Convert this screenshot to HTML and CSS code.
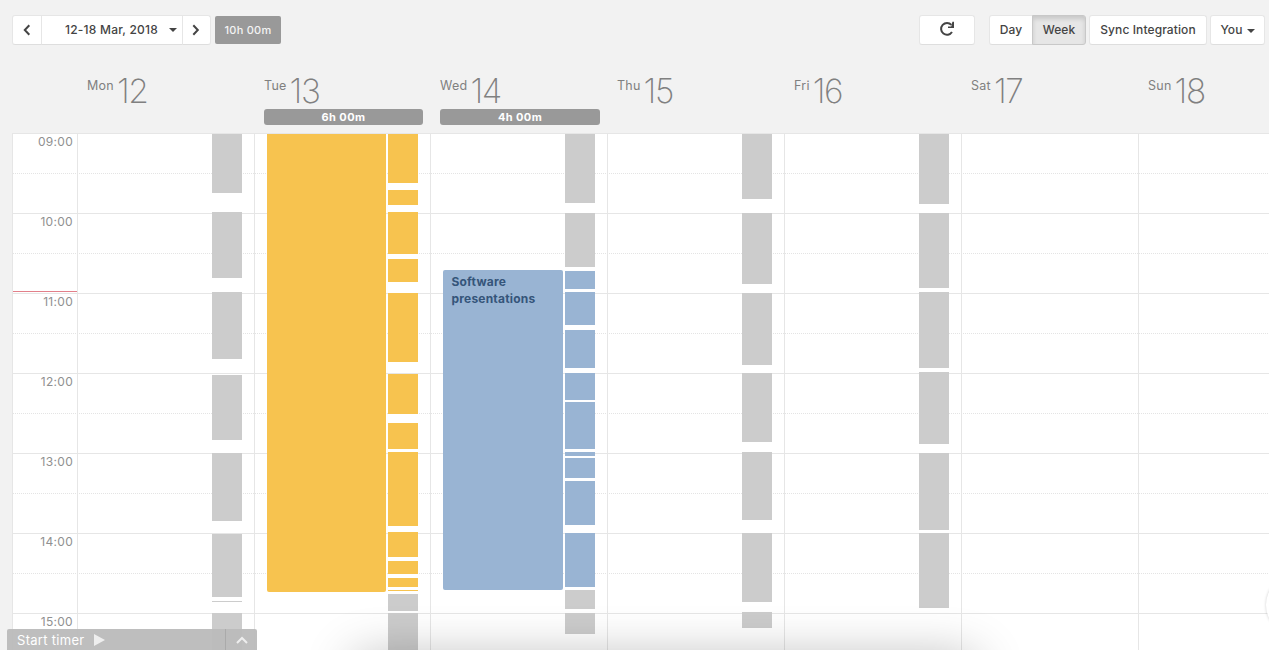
FILE: index.html
```html
<!DOCTYPE html>
<html lang="en">
<head>
<meta charset="utf-8">
<title>Timesheet</title>
<link rel="stylesheet" href="styles.css">
</head>
<body>
<div class="toolbar">
  <div class="group">
    <button class="btn prev"><svg width="8" height="12" viewBox="0 0 8 12"><path d="M6.3 1.3 1.8 6l4.5 4.7"/></svg></button>
    <button class="btn range">12-18 Mar, 2018<span class="caret"></span></button>
    <button class="btn next"><svg width="8" height="12" viewBox="0 0 8 12"><path d="M1.3 1.3 5.8 6l-4.5 4.7"/></svg></button>
  </div>
  <span class="total">10h 00m</span>
  <button class="btn refresh"><svg width="16" height="16" viewBox="0 0 16 16"><path d="M13 11A5.9 5.9 0 1 1 12.4 3.9"/><path class="solid" d="M15 .8v6.2H9V5.4h3.2L13.4 .8z"/></svg></button>
  <div class="group views">
    <button class="btn day-view">Day</button>
    <button class="btn week-view active">Week</button>
  </div>
  <button class="btn sync">Sync Integration</button>
  <button class="btn you">You<span class="caret"></span></button>
</div>

<div class="days">
  <div class="day"><div class="date"><span>Mon</span><b>12</b></div></div>
  <div class="day"><div class="date"><span>Tue</span><b>13</b></div><div class="sum">6h 00m</div></div>
  <div class="day"><div class="date"><span>Wed</span><b>14</b></div><div class="sum wide">4h 00m</div></div>
  <div class="day"><div class="date"><span>Thu</span><b>15</b></div></div>
  <div class="day"><div class="date"><span>Fri</span><b>16</b></div></div>
  <div class="day"><div class="date"><span>Sat</span><b>17</b></div></div>
  <div class="day"><div class="date"><span>Sun</span><b>18</b></div></div>
</div>

<div class="calendar">
  <div class="hours">
    <span>09:00</span><span>10:00</span><span>11:00</span><span>12:00</span><span>13:00</span><span>14:00</span><span>15:00</span>
    <i class="now"></i>
  </div>
  <div class="col">
    <div class="strip">
      <i style="height:59px"></i>
      <i style="margin-top:19px;height:66px"></i>
      <i style="margin-top:14px;height:67px"></i>
      <i style="margin-top:16px;height:65px"></i>
      <i style="margin-top:13px;height:68px"></i>
      <i style="margin-top:13px;height:63px"></i>
      <i style="margin-top:4px;height:1px"></i>
      <i style="margin-top:11px;height:37px"></i>
    </div>
  </div>
  <div class="col">
    <div class="event yellow open" style="height:458px"></div>
    <div class="strip">
      <i class="yellow" style="height:49px"></i>
      <i class="yellow" style="margin-top:7px;height:15px"></i>
      <i class="yellow" style="margin-top:7px;height:42px"></i>
      <i class="yellow" style="margin-top:5px;height:23px"></i>
      <i class="yellow" style="margin-top:11px;height:69px"></i>
      <i class="yellow" style="margin-top:12px;height:40px"></i>
      <i class="yellow" style="margin-top:9px;height:26px"></i>
      <i class="yellow" style="margin-top:3px;height:74px"></i>
      <i class="yellow" style="margin-top:6px;height:25px"></i>
      <i class="yellow" style="margin-top:4px;height:13px"></i>
      <i class="yellow" style="margin-top:4px;height:9px"></i>
      <i class="yellow" style="margin-top:3px;height:1px"></i>
      <i style="margin-top:3px;height:17px"></i>
      <i style="margin-top:2px;height:37px"></i>
    </div>
  </div>
  <div class="col">
    <div class="event blue" style="margin-top:136px;height:320px">Software<br>presentations</div>
    <div class="strip">
      <i style="height:69px"></i>
      <i style="margin-top:10px;height:54px"></i>
      <i class="blue" style="margin-top:4px;height:18px"></i>
      <i class="blue" style="margin-top:3px;height:33px"></i>
      <i class="blue" style="margin-top:5px;height:38px"></i>
      <i class="blue" style="margin-top:5px;height:27px"></i>
      <i class="blue" style="margin-top:2px;height:47px"></i>
      <i class="blue" style="margin-top:3px;height:4px"></i>
      <i class="blue" style="margin-top:2px;height:20px"></i>
      <i class="blue" style="margin-top:3px;height:44px"></i>
      <i class="blue" style="margin-top:8px;height:54px"></i>
      <i style="margin-top:3px;height:19px"></i>
      <i style="margin-top:4px;height:21px"></i>
    </div>
  </div>
  <div class="col">
    <div class="strip">
      <i style="height:65px"></i>
      <i style="margin-top:14px;height:71px"></i>
      <i style="margin-top:9px;height:72px"></i>
      <i style="margin-top:8px;height:69px"></i>
      <i style="margin-top:10px;height:68px"></i>
      <i style="margin-top:13px;height:69px"></i>
      <i style="margin-top:10px;height:16px"></i>
    </div>
  </div>
  <div class="col">
    <div class="strip">
      <i style="height:70px"></i>
      <i style="margin-top:9px;height:75px"></i>
      <i style="margin-top:4px;height:76px"></i>
      <i style="margin-top:4px;height:72px"></i>
      <i style="margin-top:9px;height:77px"></i>
      <i style="margin-top:3px;height:75px"></i>
    </div>
  </div>
  <div class="col"></div>
  <div class="col"></div>
</div>

<div class="overlays">
  <div class="dock-shadow"></div>
  <div class="help"></div>
  <div class="timer">
    <span class="start">Start timer<svg width="11" height="12" viewBox="0 0 11 12"><path d="M0 0 11 6 0 12z"/></svg></span>
    <span class="expand"><svg width="12" height="8" viewBox="0 0 12 8"><path d="M1 7 6 2l5 5"/></svg></span>
  </div>
</div>
</body>
</html>
```
FILE: styles.css
```css
* { box-sizing: border-box; }
html, body { height: 100%; overflow: hidden; }
body {
  margin: 0;
  background: #f2f2f2;
  color: #444;
  font-family: Inter, "Liberation Sans", sans-serif;
  display: flex;
  flex-direction: column;
}

/* toolbar */
.toolbar { display: flex; height: 46px; padding: 15px 4px 0 12px; flex: none; }
.group { display: flex; }
.btn {
  height: 30px;
  padding: 0;
  border: 1px solid #e6e6e6;
  border-bottom-color: #dedede;
  border-radius: 3px;
  background: #fff;
  color: #444;
  font: 500 12px/28px Inter, "Liberation Sans", sans-serif;
  letter-spacing: .1px;
  display: flex;
  align-items: center;
  justify-content: center;
}
.btn svg { fill: none; stroke: #444; stroke-width: 2; }
.prev { width: 30px; border-radius: 3px 0 0 3px; }
.range { width: 142px; margin-left: -1px; border-radius: 0; justify-content: flex-start; padding-left: 23px; letter-spacing: .22px; }
.range .caret { margin-left: 11px; }
.next { width: 29px; margin-left: -1px; border-radius: 0 3px 3px 0; }
.next svg { margin-right: 1px; }
.caret { width: 0; height: 0; border: 4px solid transparent; border-top-color: #444; border-bottom: 0; }
.total {
  width: 66px; height: 28px; margin: 1px auto 0 4px;
  border-radius: 2px; background: #999; color: #f4f4f4;
  font-size: 11px; font-weight: 500; line-height: 28px; letter-spacing: .25px; text-align: center;
}
.refresh { width: 56px; margin-right: 14px; }
.refresh svg { margin-top: -3px; }
.btn .solid { fill: #444; stroke: none; }
.day-view { width: 44px; border-radius: 3px 0 0 3px; }
.week-view { width: 54px; margin-left: -1px; border-radius: 0 3px 3px 0; }
.active { background: #e6e6e6; border-color: #c8c8c8; box-shadow: inset 0 3px 4px rgba(0,0,0,.13); }
.sync { width: 118px; margin-left: 3px; }
.you { width: 55px; margin-left: 3px; }
.you .caret { margin: 2px 0 0 4px; }

/* day headings */
.days, .calendar { display: grid; }
.days {
  grid-template-columns: 177px 176px 177px 177px 177px 177px 131px;
  height: 87px; padding: 30px 0 0 77px; flex: none;
  color: #808080;
}
.day { padding-left: 10px; }
.date { height: 33px; display: flex; align-items: flex-start; gap: 3px; }
.date span { font-size: 12.5px; line-height: 20px; letter-spacing: .25px; }
.date b { font-size: 33.5px; line-height: 30px; font-weight: 200; letter-spacing: -1.4px; }
.sum {
  width: 159px; height: 16px; border-radius: 3px;
  background: #999; color: #fff;
  font-size: 11px; line-height: 16px; font-weight: 700; letter-spacing: .4px; text-align: center;
}
.wide { width: 160px; }

/* calendar */
.calendar {
  flex: 1;
  margin-left: 12px;
  grid-template-columns: 64px 177px 176px 177px 177px 177px 177px 131px;
  grid-template-rows: 100%;
  border-left: 1px solid #e6e6e6;
  padding-top: 1px;
  min-height: 0;
  overflow: hidden;
  background:
    linear-gradient(#e6e6e6 1px, transparent 1px) 0 0 / 100% 80px,
    linear-gradient(90deg, transparent 1px, #fff 1px) 0 0 / 2px 100%,
    linear-gradient(#e4e4e4 1px, #fff 1px) 0 40px / 100% 80px;
}
.hours { position: relative; display: grid; grid-auto-rows: 80px; align-content: start; min-height: 0; overflow: hidden; }
.hours span { padding-right: 4px; text-align: right; font-size: 12px; line-height: 16px; letter-spacing: .3px; color: #909090; }
.now { position: absolute; top: 157px; left: 0; width: 65px; height: 1px; background: #e2808a; }
.col {
  border-left: 1px solid #e6e6e6;
  padding: 0 12px;
  display: flex; justify-content: flex-end; gap: 2px;
  min-height: 0;
  overflow: hidden;
}
.event { flex: 1; border-radius: 2px; padding: 3px 0 0 8.5px; font-size: 12px; line-height: 17px; font-weight: 700; letter-spacing: .2px; color: #35557a; }
.open { border-radius: 0 0 2px 2px; }
.strip {
  width: 30px;
  background: linear-gradient(#e6e6e6 1px, #fff 1px) 0 -1px / 100% 80px;
  display: flex; flex-direction: column;
}
.strip i { flex: none; background: #ccc; }
.strip .yellow, .yellow { background: #f7c34f; }
.strip .blue, .blue { background: #99b4d3; }

/* overlays */
.overlays { position: absolute; inset: 0; overflow: hidden; pointer-events: none; }
.dock-shadow { position: absolute; left: 355px; top: 658px; width: 620px; height: 40px; box-shadow: 0 0 50px rgba(0,0,0,.3); }
.help { position: absolute; left: 1266px; top: 575px; width: 60px; height: 60px; border-radius: 50%; background: #fff; box-shadow: 0 0 3px rgba(0,0,0,.2); }
.timer {
  position: absolute; left: 7px; bottom: 0; width: 250px; height: 21px;
  display: flex; border-radius: 2px 2px 0 0; background: rgba(187,187,187,.95); color: #fff;
}
.start { width: 219px; padding-left: 10px; display: flex; align-items: center; gap: 9px; font-size: 13px; letter-spacing: .3px; border-right: 1px solid #aaa; }
.start svg { fill: #eee; }
.expand { flex: 1; display: flex; align-items: center; justify-content: center; }
.expand svg { fill: none; stroke: #eee; stroke-width: 2; }
```
